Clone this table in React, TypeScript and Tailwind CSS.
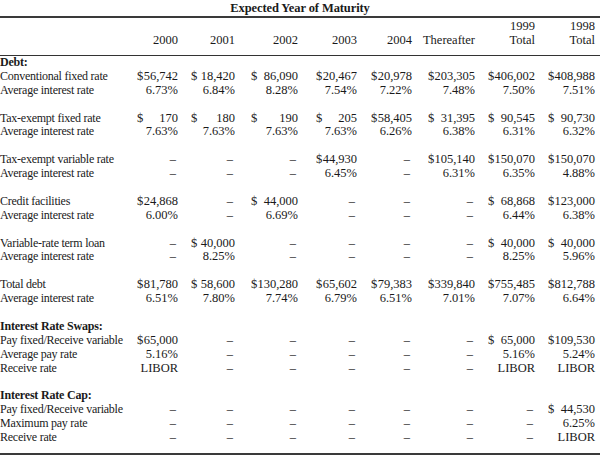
import React from 'react'

type Cell = string | { d: string } | null

// largeur du champ "$ ... nombre", par colonne
const fieldW = [
  'w-[41px]',
  'w-[44px]',
  'w-[47px]',
  'w-[41px]',
  'w-[41px]',
  'w-[47px]',
  'w-[47px]',
  'w-[47px]',
]

const grid =
  'grid grid-cols-[120px_58px_57px_63px_59px_55px_63px_60px_60px] whitespace-nowrap'

const DASH = '\u2013'

const D = (d: string) => ({ d })
const X = null

type Row =
  | { kind: 'head'; label: string }
  | { kind: 'blank' }
  | { kind: 'data'; label: string; cells: Cell[] }

const rows: Row[] = [
  { kind: 'head', label: 'Debt:' },
  {
    kind: 'data',
    label: 'Conventional fixed rate',
    cells: [D('56,742'), D('18,420'), D('86,090'), D('20,467'), D('20,978'), D('203,305'), D('406,002'), D('408,988')],
  },
  {
    kind: 'data',
    label: 'Average interest rate',
    cells: ['6.73%', '6.84%', '8.28%', '7.54%', '7.22%', '7.48%', '7.50%', '7.51%'],
  },
  { kind: 'blank' },
  {
    kind: 'data',
    label: 'Tax-exempt fixed rate',
    cells: [D('170'), D('180'), D('190'), D('205'), D('58,405'), D('31,395'), D('90,545'), D('90,730')],
  },
  {
    kind: 'data',
    label: 'Average interest rate',
    cells: ['7.63%', '7.63%', '7.63%', '7.63%', '6.26%', '6.38%', '6.31%', '6.32%'],
  },
  { kind: 'blank' },
  {
    kind: 'data',
    label: 'Tax-exempt variable rate',
    cells: [X, X, X, D('44,930'), X, D('105,140'), D('150,070'), D('150,070')],
  },
  {
    kind: 'data',
    label: 'Average interest rate',
    cells: [X, X, X, '6.45%', X, '6.31%', '6.35%', '4.88%'],
  },
  { kind: 'blank' },
  {
    kind: 'data',
    label: 'Credit facilities',
    cells: [D('24,868'), X, D('44,000'), X, X, X, D('68,868'), D('123,000')],
  },
  {
    kind: 'data',
    label: 'Average interest rate',
    cells: ['6.00%', X, '6.69%', X, X, X, '6.44%', '6.38%'],
  },
  { kind: 'blank' },
  {
    kind: 'data',
    label: 'Variable-rate term loan',
    cells: [X, D('40,000'), X, X, X, X, D('40,000'), D('40,000')],
  },
  {
    kind: 'data',
    label: 'Average interest rate',
    cells: [X, '8.25%', X, X, X, X, '8.25%', '5.96%'],
  },
  { kind: 'blank' },
  {
    kind: 'data',
    label: 'Total debt',
    cells: [D('81,780'), D('58,600'), D('130,280'), D('65,602'), D('79,383'), D('339,840'), D('755,485'), D('812,788')],
  },
  {
    kind: 'data',
    label: 'Average interest rate',
    cells: ['6.51%', '7.80%', '7.74%', '6.79%', '6.51%', '7.01%', '7.07%', '6.64%'],
  },
  { kind: 'blank' },
  { kind: 'head', label: 'Interest Rate Swaps:' },
  {
    kind: 'data',
    label: 'Pay fixed/Receive variable',
    cells: [D('65,000'), X, X, X, X, X, D('65,000'), D('109,530')],
  },
  {
    kind: 'data',
    label: 'Average pay rate',
    cells: ['5.16%', X, X, X, X, X, '5.16%', '5.24%'],
  },
  {
    kind: 'data',
    label: 'Receive rate',
    cells: ['LIBOR', X, X, X, X, X, 'LIBOR', 'LIBOR'],
  },
  { kind: 'blank' },
  { kind: 'head', label: 'Interest Rate Cap:' },
  {
    kind: 'data',
    label: 'Pay fixed/Receive variable',
    cells: [X, X, X, X, X, X, X, D('44,530')],
  },
  {
    kind: 'data',
    label: 'Maximum pay rate',
    cells: [X, X, X, X, X, X, X, '6.25%'],
  },
  {
    kind: 'data',
    label: 'Receive rate',
    cells: [X, X, X, X, X, X, X, 'LIBOR'],
  },
]

function ValueCell({ cell, col }: { cell: Cell; col: number }) {
  if (cell === null) {
    return <div className="pr-[2px] text-right">{DASH}</div>
  }
  if (typeof cell === 'string') {
    return <div className="text-right">{cell}</div>
  }
  return (
    <div className="flex justify-end">
      <div className={`flex justify-between ${fieldW[col]}`}>
        <span>$</span>
        <span>{cell.d}</span>
      </div>
    </div>
  )
}

export default function App() {
  const years = ['2000', '2001', '2002', '2003', '2004', 'Thereafter']

  return (
    <div className="h-[455px] w-[600px] overflow-hidden bg-white font-['Liberation_Serif',serif] text-[12.5px] text-[#1a1a1a]">
      {/* titre */}
      <div className="h-[16px] text-center font-bold leading-[16px] tracking-[-0.1px]">
        Expected Year of Maturity
      </div>
      <div className="h-[2px] bg-[#3a3a3a]" />

      {/* en-têtes de colonnes */}
      <div className={`${grid} h-[37px] pt-[1px] leading-[14px]`}>
        <div />
        {years.map(y => (
          <div key={y} className="pt-[14px] text-right">
            {y}
          </div>
        ))}
        <div className="text-right">
          1999
          <br />
          Total
        </div>
        <div className="text-right">
          1998
          <br />
          Total
        </div>
      </div>
      <div className="h-px bg-[#333]" />

      {/* corps */}
      <div className="leading-[13.9px]">
        {rows.map((r, i) => {
          if (r.kind === 'blank') return <div key={i} className="h-[13.9px]" />
          if (r.kind === 'head')
            return (
              <div key={i} className="h-[13.9px] text-[12px] font-bold tracking-[-0.2px]">
                {r.label}
              </div>
            )
          return (
            <div key={i} className={`${grid} h-[13.9px]`}>
              <div className="text-[12px] tracking-[-0.25px]">{r.label}</div>
              {r.cells.map((c, j) => (
                <ValueCell key={j} cell={c} col={j} />
              ))}
            </div>
          )
        })}
      </div>

      <div className="mt-[8px] h-[2px] bg-[#3a3a3a]" />
    </div>
  )
}
